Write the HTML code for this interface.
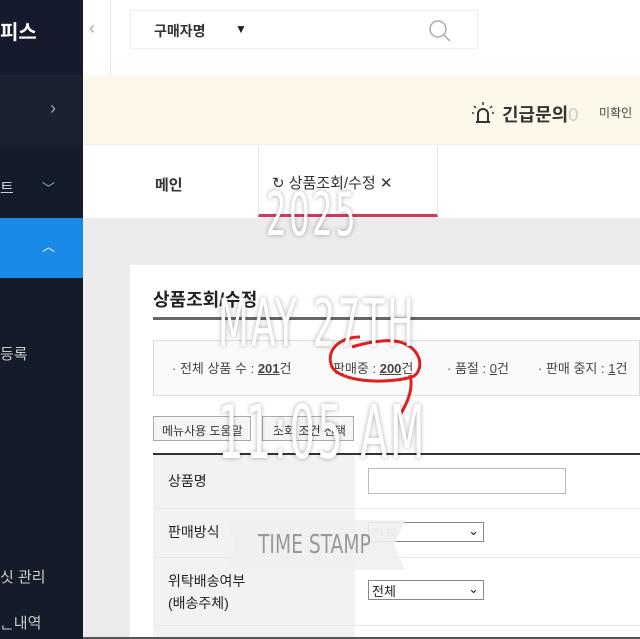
<!DOCTYPE html>
<html><head><meta charset="utf-8"><style>
*{margin:0;padding:0;box-sizing:border-box}
body{width:640px;height:639px;overflow:hidden;position:relative;background:#ececec;font-family:"Liberation Sans","Noto Sans CJK KR",sans-serif;color:#222}
.a{position:absolute}
.side{left:0;top:0;width:83px;height:639px;background:#141b2b}
.t{color:#fff;font-size:15px}
.s{font-size:13px;color:#444;white-space:nowrap;top:358px}
</style></head><body>
<div class="a side"></div>
<div class="a" style="left:0;top:0;width:83px;height:75px;background:#151b2c"></div>
<div class="a t" style="left:0;top:16px;font-size:20px;font-weight:bold">피스</div>
<div class="a" style="left:0;top:75px;width:83px;height:70px;background:#1b2131"></div>
<div class="a" style="left:50px;top:98px;color:#9aa;font-size:18px">›</div>
<div class="a t" style="left:0;top:177px;color:#ccd">트</div>
<div class="a" style="left:42px;top:178px;color:#9aa;font-size:13px">﹀</div>
<div class="a" style="left:0;top:218px;width:83px;height:60px;background:#1a8ae8"></div>
<div class="a" style="left:42px;top:236px;color:#fff;font-size:13px">︿</div>
<div class="a" style="left:0;top:343px;color:#ccc;font-size:15px">등록</div>
<div class="a" style="left:0;top:566px;color:#ccc;font-size:15px">싯 관리</div>
<div class="a" style="left:0;top:612px;color:#ccc;font-size:15px">ᆫ내역</div>

<div class="a" style="left:83px;top:0;width:557px;height:75px;background:#fff"></div>
<div class="a" style="left:110px;top:0;width:1px;height:75px;background:#e5e5e5"></div>
<div class="a" style="left:89px;top:18px;color:#aaa;font-size:18px">‹</div>
<div class="a" style="left:130px;top:10px;width:348px;height:39px;border:1px solid #eee;background:#fff"></div>
<div class="a" style="left:154px;top:21px;font-size:14px;font-weight:bold;color:#333">구매자명</div>
<div class="a" style="left:235px;top:22px;font-size:12px">▼</div>
<svg class="a" style="left:428px;top:19px" width="24" height="24"><circle cx="10" cy="10" r="8" fill="none" stroke="#aaa" stroke-width="1.5"/><line x1="16" y1="16" x2="22" y2="22" stroke="#aaa" stroke-width="1.5"/></svg>

<div class="a" style="left:83px;top:75px;width:557px;height:70px;background:#fdf8e9;border-bottom:1px solid #eee"></div>
<svg class="a" style="left:470px;top:100px" width="26" height="26"><path d="M6 22h14M8 22v-8a5 5 0 0110 0v8" fill="none" stroke="#333" stroke-width="2"/><path d="M13 2v3M4 6l2 2M22 6l-2 2M2 13h2M24 13h-2" stroke="#333" stroke-width="1.5"/></svg>
<div class="a" style="left:502px;top:101px;font-size:18px;font-weight:bold;color:#333">긴급문의<span style="color:#ccc;font-weight:normal">0</span></div>
<div class="a" style="left:599px;top:104px;font-size:12px;color:#444">미확인</div>

<div class="a" style="left:83px;top:145px;width:557px;height:73px;background:#fff"></div>
<div class="a" style="left:155px;top:174px;font-size:15px;font-weight:bold;color:#333">메인</div>
<div class="a" style="left:258px;top:146px;width:180px;height:71px;border-left:1px solid #e5e5e5;border-right:1px solid #e5e5e5;border-bottom:3px solid #e0335a"></div>
<div class="a" style="left:272px;top:172px;font-size:15px;color:#333">↻ 상품조회/수정 ✕</div>

<div class="a" style="left:130px;top:265px;width:510px;height:372px;background:#fff"></div>
<div class="a" style="left:153px;top:286px;font-size:18px;font-weight:bold;color:#222">상품조회/수정</div>
<div class="a" style="left:153px;top:317px;width:487px;height:3px;background:#666"></div>
<div class="a" style="left:153px;top:340px;width:487px;height:56px;border:1px solid #ddd;background:#fafafa"></div>
<div class="a s" style="left:172px">· 전체 상품 수 : <b><u>201</u></b>건</div>
<div class="a s" style="left:333px">판매중 : <b><u>200</u></b>건</div>
<div class="a s" style="left:447px">· 품절 : <u>0</u>건</div>
<div class="a s" style="left:538px">· 판매 중지 : <u>1</u>건</div>
<svg class="a" style="left:320px;top:325px" width="110" height="100"><path d="M40 12C20 12 5 25 12 42c8 14 50 18 80 10 15-6 10-40-30-36-15 1-30 6-30 6M90 50c4 15-4 30-10 40" fill="none" stroke="#e02020" stroke-width="3"/></svg>
<div class="a" style="left:153px;top:416px;width:98px;height:25px;border:1px solid #aaa;background:#f5f5f5;font-size:12px;color:#333;padding:5px 0 0 8px">메뉴사용 도움말</div>
<div class="a" style="left:262px;top:416px;width:92px;height:25px;border:1px solid #aaa;background:#f5f5f5;font-size:12px;color:#333;padding:5px 0 0 10px">조회 조건 선택</div>
<div class="a" style="left:153px;top:453px;width:487px;height:2px;background:#333"></div>
<div class="a" style="left:153px;top:455px;width:202px;height:182px;background:#f2f2f2"></div>
<div class="a" style="left:153px;top:508px;width:487px;height:1px;background:#e8e8e8"></div>
<div class="a" style="left:153px;top:557px;width:487px;height:1px;background:#e8e8e8"></div>
<div class="a" style="left:153px;top:625px;width:487px;height:1px;background:#e8e8e8"></div>
<div class="a" style="left:168px;top:471px;font-size:14px">상품명</div>
<div class="a" style="left:368px;top:468px;width:198px;height:26px;border:1px solid #bbb;background:#fff"></div>
<div class="a" style="left:168px;top:522px;font-size:14px">판매방식</div>
<div class="a" style="left:368px;top:522px;width:116px;height:20px;border:1px solid #888;background:#fff;font-size:13px;color:#bbb;padding-left:3px">전체<span style="position:absolute;right:4px;color:#222">⌄</span></div>
<div class="a" style="left:168px;top:570px;font-size:14px;line-height:22px">위탁배송여부<br>(배송주체)</div>
<div class="a" style="left:368px;top:580px;width:116px;height:20px;border:1px solid #888;background:#fff;font-size:13px;padding-left:3px">전체<span style="position:absolute;right:4px">⌄</span></div>
<div class="a" style="left:83px;top:637px;width:557px;height:2px;background:#555"></div>

<div class="a" style="left:225px;top:520px;width:180px;height:50px;background:rgba(240,240,240,.9);clip-path:polygon(0 0,100% 0,94% 50%,100% 100%,0 100%,6% 50%)"></div>
<div class="a" style="left:258px;top:530px;font-family:'DejaVu Sans Condensed','Liberation Sans Narrow',sans-serif;font-size:26px;color:#999;transform:scaleX(.8);transform-origin:left">TIME STAMP</div>
<div class="a" style="left:0;top:0;width:640px;font-family:'Liberation Sans Narrow','DejaVu Sans Condensed',sans-serif;color:#fff;text-shadow:0 0 6px rgba(0,0,0,.35);text-align:left">
<div class="a" style="left:266px;top:180px;font-size:60px;letter-spacing:4px;transform:scaleX(.6);transform-origin:left">2025</div>
<div class="a" style="left:218px;top:285px;font-size:66px;letter-spacing:4px;white-space:nowrap;transform:scaleX(.6);transform-origin:left">MAY 27TH</div>
<div class="a" style="left:218px;top:390px;font-size:74px;letter-spacing:4px;white-space:nowrap;transform:scaleX(.6);transform-origin:left">11:05 AM</div>
</div>
</body></html>
